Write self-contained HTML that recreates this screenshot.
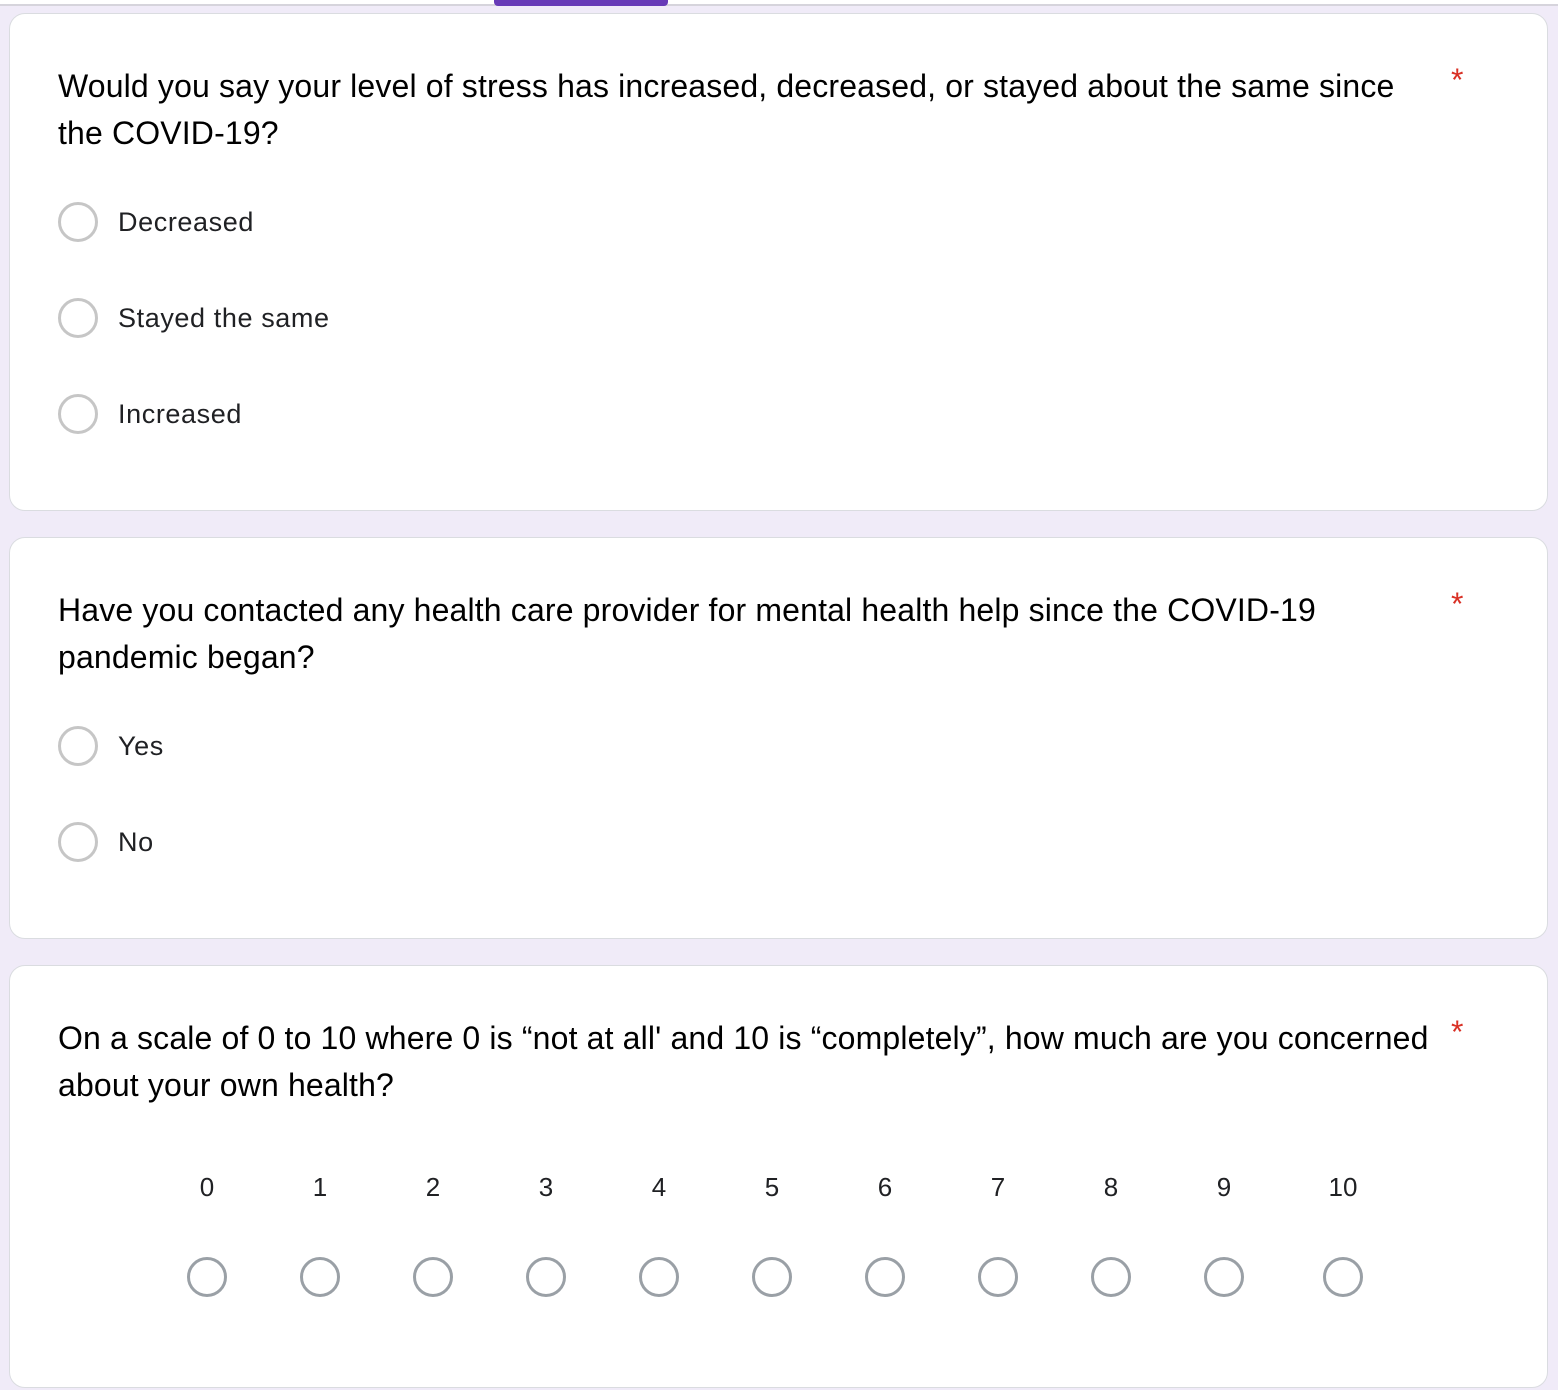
<!DOCTYPE html>
<html><head><meta charset="utf-8"><style>
*{margin:0;padding:0;box-sizing:border-box}
body{width:1558px;height:1390px;background:#f0ebf8;position:relative;overflow:hidden;font-family:"Liberation Sans",sans-serif;color:#202124}
.top{position:absolute;left:0;top:0;width:1558px;height:6px;background:#fff;border-bottom:2px solid #d6d4dc}
.tab{position:absolute;left:494px;top:0;width:174px;height:6px;background:#673ab7;border-radius:0 0 4px 4px}
.card{position:absolute;left:9px;width:1539px;background:#fff;border:1.5px solid #dadce0;border-radius:16px}
.q{position:absolute;left:58px;font-size:32px;line-height:47px;white-space:nowrap;color:#000;letter-spacing:0.15px}
.star{position:absolute;left:1451px;color:#d93025;font-size:32px}
.opt{position:absolute;left:58px;height:40px;display:flex;align-items:center;font-size:27px;letter-spacing:0.6px;color:#202124}
.r{width:40px;height:40px;border:3.5px solid #c6c6c6;border-radius:50%;margin-right:20px;flex:none}
.n{position:absolute;top:1172px;font-size:26px;width:60px;text-align:center;margin-left:-30px}
.c{position:absolute;top:1257px;width:40px;height:40px;margin-left:-20px;border:3.5px solid #9aa0a6;border-radius:50%}
</style></head><body>
<div class="top"></div><div class="tab"></div>
<div class="card" style="top:13px;height:498px"></div>
<div class="card" style="top:537px;height:402px"></div>
<div class="card" style="top:965px;height:423px"></div>

<div class="q" style="top:63px">Would you say your level of stress has increased, decreased, or stayed about the same since<br>the COVID-19?</div>
<div class="star" style="top:62px">*</div>
<div class="opt" style="top:202px"><div class="r"></div>Decreased</div>
<div class="opt" style="top:298px"><div class="r"></div>Stayed the same</div>
<div class="opt" style="top:394px"><div class="r"></div>Increased</div>

<div class="q" style="top:587px">Have you contacted any health care provider for mental health help since the COVID-19<br>pandemic began?</div>
<div class="star" style="top:586px">*</div>
<div class="opt" style="top:726px"><div class="r"></div>Yes</div>
<div class="opt" style="top:822px"><div class="r"></div>No</div>

<div class="q" style="top:1015px">On a scale of 0 to 10 where 0 is “not at all' and 10 is “completely”, how much are you concerned<br>about your own health?</div>
<div class="star" style="top:1014px">*</div>

<div class="n" style="left:207px">0</div><div class="c" style="left:207px"></div>
<div class="n" style="left:320px">1</div><div class="c" style="left:320px"></div>
<div class="n" style="left:433px">2</div><div class="c" style="left:433px"></div>
<div class="n" style="left:546px">3</div><div class="c" style="left:546px"></div>
<div class="n" style="left:659px">4</div><div class="c" style="left:659px"></div>
<div class="n" style="left:772px">5</div><div class="c" style="left:772px"></div>
<div class="n" style="left:885px">6</div><div class="c" style="left:885px"></div>
<div class="n" style="left:998px">7</div><div class="c" style="left:998px"></div>
<div class="n" style="left:1111px">8</div><div class="c" style="left:1111px"></div>
<div class="n" style="left:1224px">9</div><div class="c" style="left:1224px"></div>
<div class="n" style="left:1343px">10</div><div class="c" style="left:1343px"></div>
</body></html>
